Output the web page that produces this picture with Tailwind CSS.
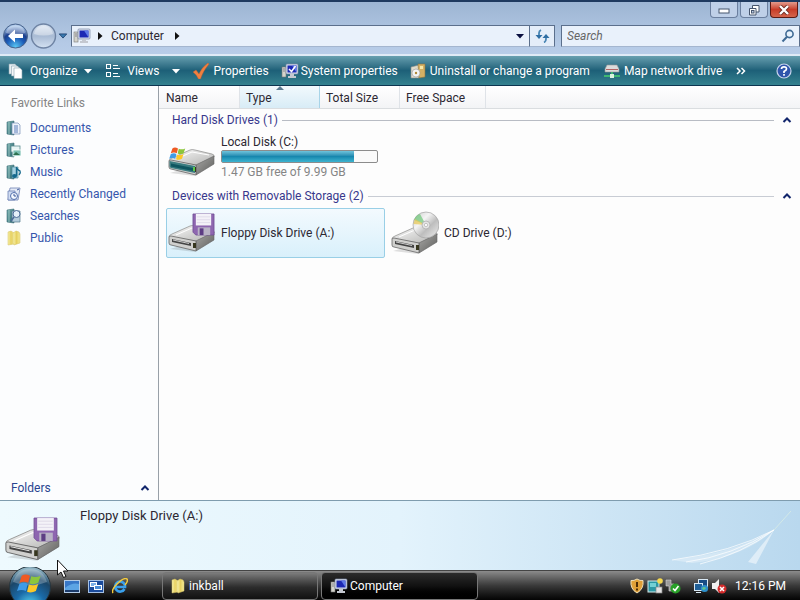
<!DOCTYPE html>
<html lang="en">
<head>
<meta charset="utf-8">
<meta name="viewport" content="width=device-width, initial-scale=1">
<title>Computer</title>
<script src="https://cdn.jsdelivr.net/npm/@tailwindcss/browser@4"></script>
</head>
<body class="flex h-screen flex-col overflow-hidden bg-[#fdfdfd] font-['Roboto','Open_Sans',sans-serif] text-xs leading-4 text-[#2c2832]">

<!-- Shared drawings -->
<svg class="absolute h-0 w-0" aria-hidden="true">
  <defs>
    <linearGradient id="metal" x1="0" y1="0" x2="1" y2="1"><stop offset="0" stop-color="#fafafa"/><stop offset="1" stop-color="#b4b4b2"/></linearGradient>
    <linearGradient id="side" x1="0" y1="0" x2="1" y2="1"><stop offset="0" stop-color="#a8a8a6"/><stop offset="1" stop-color="#5e5e5c"/></linearGradient>
    <linearGradient id="folder" x1="0" y1="0" x2="1" y2="0"><stop offset="0" stop-color="#f8f2ac"/><stop offset=".5" stop-color="#e6d060"/><stop offset="1" stop-color="#f4ea98"/></linearGradient>
    <linearGradient id="teal" x1="0" y1="0" x2="1" y2="1"><stop offset="0" stop-color="#6fa8a8"/><stop offset="1" stop-color="#2c6670"/></linearGradient>
    <radialGradient id="orb" cx=".5" cy=".95" r=".9"><stop offset="0" stop-color="#58d8f4"/><stop offset=".4" stop-color="#1a6aa8"/><stop offset=".75" stop-color="#1b4668"/><stop offset="1" stop-color="#8fb4c4"/></radialGradient>
    <radialGradient id="back" cx=".5" cy=".95" r=".85"><stop offset="0" stop-color="#5ac8f4"/><stop offset=".45" stop-color="#1c5cb8"/><stop offset=".7" stop-color="#1c3f8c"/><stop offset="1" stop-color="#9cbce4"/></radialGradient>
    <linearGradient id="fwd" x1="0" y1="0" x2="0" y2="1"><stop offset="0" stop-color="#dfe8f4"/><stop offset=".5" stop-color="#a9bbd4"/><stop offset="1" stop-color="#d4e2f2"/></linearGradient>
    <linearGradient id="disc" x1="0" y1="0" x2="1" y2="1"><stop offset="0" stop-color="#c8c8c8"/><stop offset=".35" stop-color="#f4f4f4"/><stop offset=".6" stop-color="#bdbdbd"/><stop offset="1" stop-color="#f0f0f0"/></linearGradient>
    <symbol id="drive" viewBox="0 0 48 28">
      <path d="M2 24 L27 27 L46 15 L46 11 Z" fill="#000" opacity=".12"/>
      <path d="M1 12 Q1 10 4 9 L22 1 Q24 0 27 1 L44 5 Q47 6 46 8 L28 16 Z" fill="url(#metal)" stroke="#8b8b89" stroke-width=".7"/>
      <path d="M28 16 L46 7 L46 15 L28 26 Z" fill="url(#side)" stroke="#666" stroke-width=".6"/>
      <path d="M1 12 Q1 11 3 11 L28 16 L28 26 L3 20 Q1 20 1 18 Z" fill="#d0d0ce" stroke="#666" stroke-width=".8"/>
      <path d="M4 14 L23 18 L23 21 L4 17 Z" fill="#444"/>
      <path d="M5 15 L21 18.500" stroke="#eee" stroke-width=".8"/>
      <rect x="25" y="18" width="3" height="5" fill="#37371f"/>
      <path d="M8 10 L24 3 L41 6" fill="none" stroke="#fff" stroke-width="1"/>
    </symbol>
    <symbol id="floppy" viewBox="0 0 24 24">
      <path d="M1 1 H23 V23 H4 L1 20 Z" fill="#8e66b0" stroke="#6f4c94" stroke-width=".8"/>
      <rect x="4" y="1" width="16" height="12" fill="#f4f2f8"/>
      <path d="M5 4 H19 M5 7 H19 M5 10 H19" stroke="#d8d2e4" stroke-width=".7"/>
      <rect x="6" y="15" width="13" height="8" fill="#b9b3c6"/>
      <rect x="8" y="16" width="4" height="7" fill="#5d3d84"/>
    </symbol>
    <symbol id="flag" viewBox="0 0 22 20">
      <path d="M4 3 Q7 1 11 3 L9.500 9 Q6 7 2 9 Z" fill="#ee5a24"/>
      <path d="M12 3.500 Q16 5 20 3 L18 9 Q14 11 10.500 9.500 Z" fill="#8cc63c"/>
      <path d="M2 10 Q6 8 9 10 L7.500 16 Q4 14 0 16 Z" fill="#3e9be8"/>
      <path d="M10 10.500 Q14 12 18 10 L16 16 Q12 18 8.500 16.500 Z" fill="#fcc828"/>
    </symbol>
    <symbol id="pc" viewBox="0 0 18 16">
      <rect x="1" y="4" width="4" height="10" fill="#d4d4cc" stroke="#777" stroke-width=".6"/>
      <path d="M2 6 H4 M2 8 H4" stroke="#667" stroke-width=".7"/>
      <rect x="5" y="1" width="12" height="10" rx="1" fill="#dce2ee" stroke="#7784a4" stroke-width=".7"/>
      <rect x="6.500" y="2.500" width="9" height="7" fill="#1c28b4"/>
      <path d="M11 2.500 H15.500 V9.500 Z" fill="#5c78e8"/>
      <path d="M9 11 H13 V13 H15 V15 H7 V13 H9 Z" fill="#c4c8d0"/>
    </symbol>
    <symbol id="book" viewBox="0 0 16 16">
      <path d="M1 2 L8 1 V15 L1 14 Z" fill="url(#teal)" stroke="#3e7078" stroke-width=".6"/>
      <path d="M3 2 V14" stroke="#a8d0cc" stroke-width=".8"/>
    </symbol>
    <symbol id="folders" viewBox="0 0 14 16">
      <path d="M1 2 L4 1 L7 3 V14 L1 15 Z" fill="url(#folder)" stroke="#d4c060" stroke-width=".5"/>
      <path d="M6 3 L9 1 L12 2 L13 4 V13 L7 15 L6 13 Z" fill="url(#folder)" stroke="#d4c060" stroke-width=".5"/>
    </symbol>
    <symbol id="chev" viewBox="0 0 10 6"><path d="M1.500 5 L5 1.500 L8.500 5" fill="none" stroke="#12266c" stroke-width="2"/></symbol>
  </defs>
</svg>

<header class="shrink-0 border-t-2 border-[#1f3a5f] bg-linear-to-b from-[#9db5d3] via-[#b5cae6] to-[#c3d6ef]">
  <div class="flex h-5 justify-end gap-0.5 px-0.5">
    <button aria-label="Minimize" class="flex h-4 w-7 items-center justify-center rounded-b-sm border border-t-0 border-[#6b7f9f] bg-[#bfd0e8]"><svg class="h-2 w-3" viewBox="0 0 12 8"><rect x="1" y="3" width="10" height="4" fill="#fff" stroke="#47566e"/></svg></button>
    <button aria-label="Restore" class="flex h-4 w-7 items-center justify-center rounded-b-sm border border-t-0 border-[#6b7f9f] bg-[#bfd0e8]"><svg class="h-3 w-3" viewBox="0 0 12 12"><path d="M4.500 1.500 H11 V8 H4.500 Z" fill="#fff" stroke="#47566e"/><path d="M1.500 4.500 H8 V11 H1.500 Z" fill="#fff" stroke="#47566e"/><rect x="3.500" y="6.500" width="2.500" height="2.500" fill="#bfd0e8" stroke="#47566e"/></svg></button>
    <button aria-label="Close" class="flex h-4 w-7 items-center justify-center rounded-b-sm border border-t-0 border-[#5b1a14] bg-linear-to-b from-[#e29a8c] via-[#c83c28] to-[#d4644c]"><svg class="h-2.5 w-3" viewBox="0 0 12 10"><path d="M2 1 L10 9 M10 1 L2 9" stroke="#6b2a20" stroke-width="4"/><path d="M2 1 L10 9 M10 1 L2 9" stroke="#fff" stroke-width="2.400"/></svg></button>
  </div>

  <nav class="flex h-8 items-center pb-1" aria-label="Address">
    <button aria-label="Back" class="ml-0.5"><svg class="h-7 w-7" viewBox="0 0 28 28"><circle cx="13.500" cy="14" r="12" fill="url(#back)" stroke="#4a648c"/><path d="M4 11 Q6 3 13.500 3 Q21 3 23 11 Q14 14 4 11Z" fill="#fff" opacity=".35"/><path d="M6 14 L13 7.500 V12 H21 V16 H13 V20.500 Z" fill="#fff"/></svg></button>
    <button aria-label="Forward"><svg class="h-7 w-7" viewBox="0 0 28 28"><circle cx="13.500" cy="14" r="12" fill="url(#fwd)" stroke="#6f84a4" stroke-width="1.400"/><path d="M4 12 Q6 4 13.500 4 Q21 4 23 12 Q14 15 4 12Z" fill="#fff" opacity=".35"/></svg></button>
    <button aria-label="Recent pages"><svg class="h-2 w-2.5" viewBox="0 0 12 8"><path d="M1.500 1.500 H10.500 L6 6.500 Z" fill="#3a7ab0" stroke="#1c3e6c"/></svg></button>
    <div class="ml-[3px] flex h-[22px] flex-1 items-center border border-[#5b6f8c] border-b-[#a4b6cf] bg-[#e9f1fb] pl-px">
      <svg class="h-4 w-[18px]"><use href="#pc"/></svg>
      <svg class="ml-1.5 h-2 w-1.5" viewBox="0 0 6 8"><path d="M1 0 L5.500 4 L1 8Z" fill="#111"/></svg>
      <a href="#" class="ml-2">Computer</a>
      <svg class="ml-2.5 h-2 w-1.5" viewBox="0 0 6 8"><path d="M1 0 L5.500 4 L1 8Z" fill="#111"/></svg>
      <button aria-label="Previous locations" class="mr-1 ml-auto"><svg class="h-2 w-2.5" viewBox="0 0 10 8"><path d="M1 2 H9 L5 6.500Z" fill="#0a1040"/></svg></button>
    </div>
    <button aria-label="Refresh" class="flex h-[22px] w-[25px] items-center justify-center border border-l-0 border-[#5b6f8c] border-b-[#a4b6cf] bg-[#e4edf9]"><svg class="h-3.5 w-4" viewBox="0 0 16 14"><path d="M7 1 Q5 2 5 4 V8" fill="none" stroke="#4a86b4" stroke-width="1.800"/><path d="M1.500 6 H8.500 L5 10Z" fill="#2f6ea4"/><path d="M10 13.500 Q12 12.500 12 10 V8" fill="none" stroke="#4a86b4" stroke-width="1.800"/><path d="M8.500 9 H15.500 L12 5Z" fill="#2f6ea4"/></svg></button>
    <label class="ml-1.5 flex h-[22px] w-[239px] items-center border border-[#5b6f8c] border-b-[#a4b6cf] bg-[#e9f1fb] px-1">
      <input type="search" aria-label="Search" placeholder="Search" class="min-w-0 flex-1 bg-transparent px-px italic outline-none placeholder:text-[#666]">
      <svg class="h-3.5 w-3.5" viewBox="0 0 14 14"><circle cx="8.500" cy="5" r="3.600" fill="#e8f3fd" stroke="#3f6a94" stroke-width="1.600"/><path d="M6 7.800 L1.500 12.500" stroke="#3f6a94" stroke-width="2"/></svg>
    </label>
  </nav>

  <div class="flex h-8 items-center border-t-2 border-b border-t-[#dfeaf6] border-b-[#0c3450] bg-linear-to-b from-[#67a0b0] via-[#1d6078] via-50% to-[#35828f] px-2 whitespace-nowrap text-white">
    <button class="flex items-center gap-1.5"><svg class="h-4 w-4" viewBox="0 0 16 16"><path d="M1 1 H7 L9 3 V11 H1Z" fill="#e8eef2" stroke="#8ca4b0" stroke-width=".6"/><path d="M3.500 3 H9.500 L11.500 5 V13 H3.500Z" fill="#f4f6f8" stroke="#8ca4b0" stroke-width=".6"/><path d="M6 5 H12 L14 7 V15.500 H6Z" fill="#fff" stroke="#8ca4b0" stroke-width=".6"/></svg>Organize<svg class="h-2 w-2.5" viewBox="0 0 10 8"><path d="M1 2 H9 L5 6.500Z" fill="#fff"/></svg></button>
    <button class="ml-3 flex items-center gap-1.5"><svg class="h-4 w-4" viewBox="0 0 16 16"><g fill="none" stroke="#fff"><rect x="1.500" y="1.500" width="4" height="4"/><rect x="1.500" y="9.500" width="4" height="4"/><path d="M8 2.500 H13 M8 5.500 H15 M8 10.500 H13 M8 13.500 H15"/></g></svg>Views</button>
    <button aria-label="More view options" class="ml-3"><svg class="h-2 w-2.5" viewBox="0 0 10 8"><path d="M1 2 H9 L5 6.500Z" fill="#fff"/></svg></button>
    <button class="ml-3 flex items-center gap-1"><svg class="h-4 w-4" viewBox="0 0 16 16"><path d="M0 9 L3 7 L6 11 Q9 4 15 0 L16 1 Q10 8 7.500 16 H5.500 Q4 12 0 9Z" fill="#f08040" stroke="#c85c28" stroke-width=".4"/></svg>Properties</button>
    <button class="ml-3 flex items-center gap-0.5"><svg class="h-4 w-[18px]" viewBox="0 0 18 16"><use href="#pc"/><path d="M8 6 L10.500 8.500 L14.500 3" fill="none" stroke="#fff" stroke-width="1.500"/></svg>System properties</button>
    <button class="ml-3 flex items-center gap-1"><svg class="h-4 w-4" viewBox="0 0 16 16"><path d="M1 4 L9 2 V15 L1 15Z" fill="#e0dccc" stroke="#888" stroke-width=".6"/><path d="M8 1 H15 V14 L9 15Z" fill="#d4b064" stroke="#8c7440" stroke-width=".6"/><circle cx="6" cy="10" r="4" fill="#f4f4f4" stroke="#999" stroke-width=".6"/><circle cx="6" cy="10" r="1.200" fill="#b08838"/><path d="M10 3 H13 V6 H10Z" fill="#f8e8a8"/></svg>Uninstall or change a program</button>
    <button class="ml-3.5 flex items-center gap-1"><svg class="h-4 w-4" viewBox="0 0 16 16"><path d="M3 2 H13 L15 6 V9 H1 V6Z" fill="#dcdcdc" stroke="#999" stroke-width=".6"/><path d="M2 6.500 H14" stroke="#a44" stroke-width=".8"/><path d="M8 9 V13 M0 13 H16" stroke="#3fb873" stroke-width="2"/><rect x="6" y="11" width="4" height="4" fill="#d8f4e0"/></svg>Map network drive</button>
    <button aria-label="More commands" class="ml-3.5"><svg class="h-2 w-2.5" viewBox="0 0 10 8"><path d="M1 1 L4 4 L1 7 M5.500 1 L8.500 4 L5.500 7" fill="none" stroke="#fff" stroke-width="1.500"/></svg></button>
    <button aria-label="Help" class="ml-auto"><svg class="h-4 w-4" viewBox="0 0 16 16"><circle cx="8" cy="8" r="7" fill="#2f55ac" stroke="#c8d4ec" stroke-width="1.200"/><path d="M5.500 6 Q5.500 3.800 8 3.800 Q10.600 3.800 10.500 6 Q10.500 7.300 8 8.600 V10 M8 11 V12.800" fill="none" stroke="#fff" stroke-width="1.700"/></svg></button>
  </div>
</header>

<div class="flex min-h-0 flex-1">
  <aside class="flex w-[159px] shrink-0 flex-col border-r border-[#98a0a8] bg-[#fcfdfe]">
    <h2 class="px-[11px] pt-[9px] pb-1.5 text-[#858585]">Favorite Links</h2>
    <ul class="text-[#3556ac]">
      <li><a href="#" class="flex h-[22px] items-center gap-2 px-1.5"><svg class="h-4 w-4" viewBox="0 0 16 16"><use href="#book"/><path d="M6 3 H12 L14 5 V14 H6Z" fill="#eef3fb" stroke="#7890b8" stroke-width=".7"/><path d="M8 6 H12 M8 8 H12 M8 10 H12 M8 12 H12" stroke="#4a70b0" stroke-width=".9"/></svg>Documents</a></li>
      <li><a href="#" class="flex h-[22px] items-center gap-2 px-1.5"><svg class="h-4 w-4" viewBox="0 0 16 16"><use href="#book"/><rect x="5" y="4" width="9" height="6" fill="#e8f4f4" stroke="#5a8c90" stroke-width=".8"/><rect x="7" y="8" width="8" height="6" fill="#7cc0b4" stroke="#fff" stroke-width=".8"/><path d="M7 13 L10 10 L14 13Z" fill="#2e7050"/></svg>Pictures</a></li>
      <li><a href="#" class="flex h-[22px] items-center gap-2 px-1.5"><svg class="h-4 w-4" viewBox="0 0 16 16"><use href="#book"/><path d="M6 3 H12 V14 H6Z" fill="#a4d0e0" stroke="#4c8898" stroke-width=".7"/><ellipse cx="8.500" cy="12" rx="2.500" ry="2" fill="#14688c"/><path d="M10.500 12 V3 Q11 6 14 7 Q15 9 13 11" fill="none" stroke="#14688c" stroke-width="1.400"/></svg>Music</a></li>
      <li><a href="#" class="flex h-[22px] items-center gap-2 px-1.5"><svg class="h-4 w-4" viewBox="0 0 16 16"><path d="M4 2 H14 L12 14 H2Z" fill="#e4eaf6" stroke="#6c80b4" stroke-width=".8"/><path d="M2 5 H9 V14 H2Z" fill="#d0dcf2" stroke="#6c80b4" stroke-width=".8"/><circle cx="8" cy="10" r="3.500" fill="#f4f8ff" stroke="#5470ac"/><path d="M8 8 V10 H10 M11 4 L13 3" stroke="#3c5898" fill="none"/></svg>Recently Changed</a></li>
      <li><a href="#" class="flex h-[22px] items-center gap-2 px-1.5"><svg class="h-4 w-4" viewBox="0 0 16 16"><use href="#book"/><path d="M6 3 H14 V14 H6Z" fill="#b4ccdc" stroke="#54788c" stroke-width=".7"/><circle cx="10.500" cy="6" r="3.500" fill="#e4f0fa" stroke="#4c6c98"/><path d="M8 9 L5 13" stroke="#4c6c98" stroke-width="1.600"/></svg>Searches</a></li>
      <li><a href="#" class="flex h-[22px] items-center gap-2 px-1.5"><svg class="h-4 w-4"><use href="#folders"/></svg>Public</a></li>
    </ul>
    <button class="mt-auto flex h-6 items-center justify-between pr-2 pl-[11px] text-[#2a4590]">Folders<svg class="h-1.5 w-2.5"><use href="#chev"/></svg></button>
  </aside>

  <main class="min-w-0 flex-1">
    <div class="flex h-[23px] items-center border-b border-[#dadde0] bg-linear-to-b from-white to-[#f3f4f6] pl-px">
      <button class="h-full w-20 border-r border-[#dfe3e8] px-1.5 pt-0.5 text-left">Name</button>
      <button class="relative h-full w-20 border-r border-[#a8d4e8] bg-linear-to-b from-[#f2f9fd] to-[#d8ecf6] px-1.5 pt-0.5 text-left">Type<svg class="absolute top-0 left-9 h-1 w-2" viewBox="0 0 8 4"><path d="M0 4 L4 0 L8 4Z" fill="#5a7a90"/></svg></button>
      <button class="h-full w-20 border-r border-[#dfe3e8] px-1.5 pt-0.5 text-left">Total Size</button>
      <button class="h-full w-[86px] border-r border-[#dfe3e8] px-1.5 pt-0.5 text-left">Free Space</button>
    </div>

    <section class="pr-2 pl-[9px]">
      <div class="flex h-[22px] items-center gap-1 pl-1 text-[#38388c]"><h2>Hard Disk Drives (1)</h2><hr class="flex-1 border-[#b8bcc4]"><button aria-label="Collapse Hard Disk Drives" class="ml-1"><svg class="h-1.5 w-2.5"><use href="#chev"/></svg></button></div>
      <div class="flex h-[54px] w-[218px] items-start gap-1.5 pt-[3px]">
        <svg class="mt-3 h-8 w-12 shrink-0" viewBox="0 0 48 32"><use href="#drive" y="3" width="48" height="28"/><path d="M1.500 15 L27 20 V27 L3 22 Q1.500 21.500 1.500 20Z" fill="#3a7c80"/><path d="M3 17.500 L25 22 V25 L3 20.500Z" fill="#0f5660"/><rect x="25" y="21" width="2" height="4" fill="#5cc84c"/><use href="#flag" x="1" y="0" width="18" height="16"/></svg>
        <div class="-ml-px w-[157px] whitespace-nowrap">
          <div>Local Disk (C:)</div>
          <div class="h-[13px] rounded-xs border border-[#8c8c8c] bg-[#fafafa]"><div class="h-full bg-linear-to-b from-[#6fc4dc] via-[#1787ae] to-[#3cb4d0]" style="width:85%"></div></div>
          <div class="pt-px text-[#858585]">1.47 GB free of 9.99 GB</div>
        </div>
      </div>
    </section>

    <section class="pr-2 pl-[9px]">
      <div class="flex h-[22px] items-center gap-1 pl-1 text-[#38388c]"><h2>Devices with Removable Storage (2)</h2><hr class="flex-1 border-[#c8ccd4]"><button aria-label="Collapse Devices with Removable Storage" class="ml-1"><svg class="h-1.5 w-2.5"><use href="#chev"/></svg></button></div>
      <div class="-ml-0.5 flex gap-1 pt-px">
        <button class="flex h-[50px] w-[219px] items-center gap-[5px] rounded-xs border border-[#99cfe6] bg-linear-to-b from-[#f3fafe] to-[#d9f0fb] pl-px text-left">
          <svg class="h-11 w-12 shrink-0" viewBox="0 0 48 44"><use href="#drive" y="14" width="48" height="28"/><use href="#floppy" x="24" y="1" width="23" height="25"/></svg>
          Floppy Disk Drive (A:)
        </button>
        <button class="flex h-[50px] w-[219px] items-center gap-[5px] border border-transparent pl-px text-left">
          <svg class="h-11 w-12 shrink-0" viewBox="0 0 48 44"><use href="#drive" y="16" width="48" height="28"/><ellipse cx="35" cy="14" rx="13" ry="13" fill="url(#disc)" stroke="#a4a4a4" stroke-width=".7"/><path d="M35 14 L23 9 Q25 4 29 3Z" fill="#6cc878" opacity=".7"/><path d="M35 14 L24 8 Q23 10 22.500 13Z" fill="#e8c850" opacity=".7"/><circle cx="35" cy="14" r="4" fill="#e4e4e4" stroke="#aaa" stroke-width=".7"/><circle cx="35" cy="14" r="1.600" fill="#fff" stroke="#999" stroke-width=".5"/></svg>
          CD Drive (D:)
        </button>
      </div>
    </section>
  </main>
</div>

<section aria-label="Details" class="relative flex h-[70px] shrink-0 gap-4 border-t border-[#7f9cae] bg-linear-to-r from-[#eefafe] via-[#e3f3fc] to-[#b9d8ee] pl-1">
  <svg class="absolute right-2 bottom-1 h-14 w-30" viewBox="0 0 120 56" aria-hidden="true"><path d="M0 50 Q60 44 102 20 Q70 48 20 53Z" fill="#fff" opacity=".3"/><path d="M0 50 Q60 42 102 20 M14 52 Q60 46 102 20 M28 54 Q70 44 102 20" fill="none" stroke="#fff" opacity=".7"/><path d="M76 52 L102 20 L84 54Z" fill="#fff" opacity=".5"/><path d="M102 20 L119 1" stroke="#e4f4e4" opacity=".6"/></svg>
  <svg class="mt-3.5 h-[50px] w-[60px] shrink-0" viewBox="0 0 60 50"><use href="#drive" x="0" y="14" width="58" height="33"/><use href="#floppy" x="29" y="2" width="25" height="25"/></svg>
  <p class="pt-[7px] text-[13px]">Floppy Disk Drive (A:)</p>
</section>

<footer class="relative flex h-[30px] shrink-0 items-center border-t border-[#444] bg-linear-to-b from-[#8c8c8c] via-[#3a3a3a] via-50% to-[#050505] text-white">
  <button aria-label="Start" class="-mt-1 ml-2 h-11 w-11 shrink-0 self-start"><svg class="h-11 w-11" viewBox="0 0 44 44"><circle cx="22" cy="20" r="20.500" fill="url(#orb)" stroke="#26343c"/><path d="M5 15 Q9 2 22 2 Q35 2 39 15 Q22 22 5 15Z" fill="#fff" opacity=".25"/><use href="#flag" x="9" y="5" width="26" height="24"/></svg></button>
  <div class="ml-3 flex items-center gap-2">
    <button aria-label="Show desktop"><svg class="h-4 w-4" viewBox="0 0 16 16"><rect x=".5" y="2.500" width="15" height="12" fill="#3878c8" stroke="#b4cce8"/><path d="M1 10 Q8 4 15 6 V12 H1Z" fill="#5ca4e4"/><rect x="1" y="12" width="14" height="2" fill="#1c3c6c"/></svg></button>
    <button aria-label="Switch between windows"><svg class="h-4 w-4" viewBox="0 0 16 16"><rect x=".5" y="2.500" width="15" height="12" fill="#1c4c9c" stroke="#a4c0e4"/><rect x="2.500" y="4.500" width="6" height="4" fill="#7cb0e8" stroke="#fff"/><rect x="6.500" y="7.500" width="7" height="4" fill="#4c8cd4" stroke="#fff"/></svg></button>
    <button aria-label="Internet Explorer"><svg class="h-4 w-4" viewBox="0 0 16 16"><path d="M12.500 11 A5 5 0 1 1 13 7.500 V9 H4.500" fill="none" stroke="#3aa0ec" stroke-width="2.600"/><path d="M1 15 Q-1 12 5 6 Q12 -1 15 1 Q16.500 3 13 7" fill="none" stroke="#f4cc3c" stroke-width="1.500"/></svg></button>
  </div>
  <button class="ml-[34px] flex h-7 w-[156px] items-center gap-1 rounded-sm border border-[#777] bg-linear-to-b from-[#7c7c7c] via-[#2c2c2c] via-55% to-[#111] px-2"><svg class="h-4 w-3.5"><use href="#folders"/></svg>inkball</button>
  <button class="ml-[3px] flex h-7 w-[157px] items-center gap-0.5 rounded-sm border border-[#777] bg-linear-to-b from-[#2c2c2c] via-[#111] to-black px-2"><svg class="h-4 w-[18px]"><use href="#pc"/></svg>Computer</button>
  <div class="ml-auto flex items-center gap-0.5 pr-3.5">
    <svg class="h-4 w-4" viewBox="0 0 16 16"><path d="M8 1 Q11 3 14 2.500 Q15 11 8 15 Q1 11 2 2.500 Q5 3 8 1Z" fill="#e0a038" stroke="#f0e0b8"/><path d="M8 4 V9 M8 10.500 V12.500" stroke="#4c2c08" stroke-width="2"/></svg>
    <svg class="h-4 w-4" viewBox="0 0 16 16"><rect x="1" y="3" width="11" height="11" fill="#2c98a4" stroke="#d4ecec"/><path d="M3 5 H9 V9 H3Z" fill="#74d0d4"/><rect x="9" y="9" width="6" height="6" fill="#e4e4e4" stroke="#888" stroke-width=".7"/><circle cx="13" cy="3" r="2.800" fill="#f4d850"/></svg>
    <svg class="h-4 w-4" viewBox="0 0 16 16"><path d="M1 2 H6 V6 H9 V13 H4 V8 H1Z" fill="#9a9a9a" stroke="#d4d4d4" stroke-width=".6"/><circle cx="10.500" cy="10.500" r="5" fill="#28a028"/><path d="M8 10.500 L10 12.500 L13.500 8" fill="none" stroke="#fff" stroke-width="1.600"/></svg>
    <svg class="ml-2.5 h-4 w-4" viewBox="0 0 16 16"><rect x="5.500" y="1.500" width="9" height="8" fill="#184c84" stroke="#d8e8f4"/><rect x="1.500" y="5.500" width="8" height="7" fill="#206098" stroke="#d8e8f4"/><path d="M3 14.500 H8" stroke="#d8e8f4"/><circle cx="11.500" cy="10.500" r="3.600" fill="#2c90cc"/><path d="M9 10 Q11 8 13 10 Q12 12 10 12Z" fill="#64c488"/></svg>
    <svg class="h-4 w-4" viewBox="0 0 16 16"><path d="M1 5 H4 L8 1 V15 L4 11 H1Z" fill="#f0f0f0"/><circle cx="11" cy="11" r="4.500" fill="#d42c2c"/><path d="M9 9 L13 13 M13 9 L9 13" stroke="#fff" stroke-width="1.500"/></svg>
    <time class="ml-1.5">12:16 PM</time>
  </div>
</footer>

<!-- Mouse pointer -->
<svg class="pointer-events-none absolute bottom-[21px] left-14 h-5 w-3.5" viewBox="0 0 14 20" aria-hidden="true"><path d="M1.500 1 V16 L5 13 L7.500 18.500 L10 17.500 L7.500 12 H12Z" fill="#fff" stroke="#111"/></svg>
</body>
</html>
